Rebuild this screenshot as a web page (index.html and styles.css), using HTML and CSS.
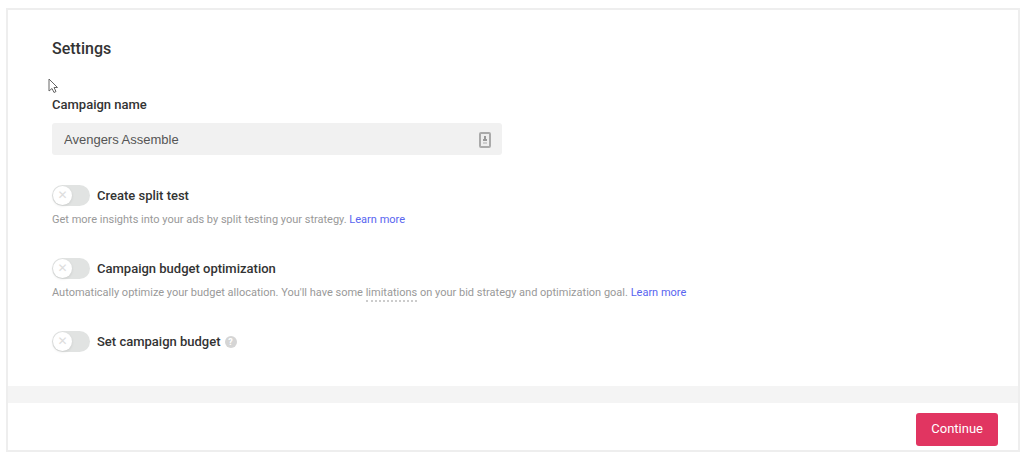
FILE: index.html
```html
<!DOCTYPE html>
<html lang="en">
<head>
  <meta charset="UTF-8">
  <meta name="viewport" content="width=device-width, initial-scale=1.0">
  <title>Campaign settings</title>
  <link rel="stylesheet" href="styles.css">
</head>
<body>
  <form class="panel">
    <section class="settings">
      <h1>Settings</h1>

      <label class="field-label" for="campaignName">Campaign name</label>
      <div class="field">
        <input type="text" id="campaignName" value="Avengers Assemble">
        <svg class="field-icon" viewBox="0 0 12 16" aria-hidden="true">
          <rect x="1" y="1" width="10" height="14" rx="1" fill="#eee" stroke="#aaa" stroke-width="2"/>
          <path d="M5 4h2v3h1v2H4V7h1z" fill="#999"/>
          <path d="M4 11h4" stroke="#aaa"/>
        </svg>
      </div>

      <div class="option">
        <div class="option-row">
          <input type="checkbox" class="toggle" id="splitTest">
          <label for="splitTest">Create split test</label>
        </div>
        <p>Get more insights into your ads by split testing your strategy. <a href="#">Learn more</a></p>
      </div>

      <div class="option">
        <div class="option-row">
          <input type="checkbox" class="toggle" id="budgetOptimization">
          <label for="budgetOptimization">Campaign budget optimization</label>
        </div>
        <p>Automatically optimize your budget allocation. You'll have some <span class="hint">limitations</span> on your bid strategy and optimization goal. <a href="#">Learn more</a></p>
      </div>

      <div class="option">
        <div class="option-row">
          <input type="checkbox" class="toggle" id="campaignBudget">
          <label for="campaignBudget">Set campaign budget</label>
          <span class="help">?</span>
        </div>
      </div>

      <svg class="cursor" viewBox="0 0 10 16" aria-hidden="true">
        <path d="M1 1v12l3-2.500 2 4 2-1-2-4h3.500z" fill="#fff" stroke="#666"/>
      </svg>
    </section>

    <footer class="actions">
      <button type="button">Continue</button>
    </footer>
  </form>
</body>
</html>
```
FILE: styles.css
```css
* {
  box-sizing: border-box;
}
body {
  margin: 8px 4px 6px 6px;
  font-family: Roboto, "Liberation Sans", sans-serif;
  font-size: 13px;
  color: #333;
  background-color: #fff;
}
.panel {
  border: 2px solid #eee;
}
.settings {
  position: relative;
  padding: 29px 44px 34px;
}
h1 {
  margin: 0 0 36px;
  font-size: 16px;
  font-weight: 500;
  line-height: 20px;
}
.field-label {
  display: block;
  margin-bottom: 8px;
  font-weight: 500;
  line-height: 20px;
}
.field {
  position: relative;
  max-width: 450px;
  margin-bottom: 30px;
}
.field input {
  display: block;
  width: 100%;
  height: 32px;
  padding: 0 40px 0 12px;
  border: none;
  border-radius: 3px;
  background-color: #f1f1f1;
  color: #555;
  font-family: "Liberation Sans", sans-serif;
  font-size: 13px;
}
.field-icon {
  position: absolute;
  top: 9px;
  right: 11px;
  width: 12px;
  height: 16px;
}
.option {
  margin-bottom: 30px;
}
.option:last-of-type {
  margin-bottom: 0;
}
.option-row {
  display: flex;
  align-items: center;
  height: 21px;
}
.option-row label {
  margin-left: 7px;
  font-weight: 500;
  line-height: 20px;
}
.toggle {
  appearance: none;
  display: flex;
  align-items: center;
  width: 38px;
  height: 21px;
  margin: 0;
  padding: 1px;
  border-radius: 11px;
  background-color: #e1e3e2;
}
.toggle::before {
  content: "✕";
  width: 19px;
  height: 19px;
  border-radius: 50%;
  background-color: #fff;
  box-shadow: 0 1px 3px rgba(0, 0, 0, 0.1);
  color: #ddd;
  font-family: "DejaVu Sans", sans-serif;
  font-size: 12px;
  line-height: 19px;
  text-align: center;
}
.toggle:checked {
  justify-content: flex-end;
}
.option p {
  margin: 6px 0 0;
  color: #999;
  font-size: 11px;
  line-height: 16px;
}
.option a {
  color: #5865f0;
  text-decoration: none;
}
.hint {
  padding-bottom: 1px;
  border-bottom: 2px dotted #ccc;
}
.help {
  width: 12px;
  height: 12px;
  margin-left: 4px;
  border-radius: 50%;
  background-color: #d5d5d5;
  color: #fff;
  font-size: 9px;
  font-weight: 700;
  line-height: 12px;
  text-align: center;
}
.cursor {
  position: absolute;
  top: 68px;
  left: 40px;
  width: 10px;
  height: 16px;
}
.actions {
  display: flex;
  justify-content: flex-end;
  padding: 10px 20px 4px;
  border-top: 17px solid #f4f4f4;
}
.actions button {
  height: 33px;
  padding: 0 15px 2px;
  border: none;
  border-radius: 3px;
  background-color: #e13561;
  color: #fff;
  font-family: inherit;
  font-size: 13px;
  cursor: pointer;
}
```
